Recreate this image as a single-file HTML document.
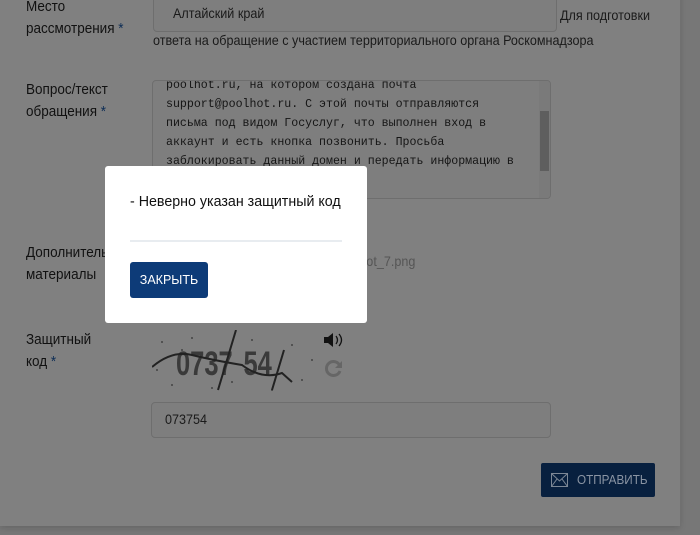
<!DOCTYPE html>
<html><head><meta charset="utf-8"><style>
body{margin:0;width:700px;height:535px;background:#777;position:relative;overflow:hidden;font-family:"Liberation Sans",sans-serif;color:#111}
.card{position:absolute;left:0;top:-10px;width:680px;height:536px;background:#808080;box-shadow:0 2px 6px rgba(0,0,0,.15)}
.a{position:absolute;white-space:nowrap}
.n{transform:scaleX(.9);transform-origin:0 0}
.lbl{font-size:15px;line-height:22px;color:#111}
.st{color:#0d2d55}
.inp{position:absolute;border:1px solid #6e6e6e;border-radius:4px;background:#7e7e7e}
.mono{font-family:"Liberation Mono","DejaVu Sans Mono",monospace;font-size:11.6px;line-height:19px;color:#151515}
.modal{position:absolute;left:105px;top:166px;width:262px;height:157px;background:#fff;border-radius:3px}
</style></head><body>
<div class="card"></div>
<div class="a lbl n" style="left:26px;top:-4px">Место<br>рассмотрения <span class="st">*</span></div>
<div class="inp" style="left:153px;top:-6px;width:402px;height:36px"></div>
<div class="a n" style="left:173px;top:5px;font-size:14px;color:#1a1a1a">Алтайский край</div>
<div class="a n" style="left:560px;top:7px;font-size:14px;color:#1a1a1a">Для подготовки</div>
<div class="a n" style="left:153px;top:32px;font-size:14px;color:#1a1a1a">ответа на обращение с участием территориального органа Роскомнадзора</div>
<div class="a lbl n" style="left:26px;top:79px">Вопрос/текст<br>обращения <span class="st">*</span></div>
<div class="inp" style="left:152px;top:80px;width:397px;height:117px;overflow:hidden">
<div class="mono" style="position:absolute;left:13px;top:-5px;white-space:pre">poolhot.ru, на котором создана почта
support@poolhot.ru. С этой почты отправляются
письма под видом Госуслуг, что выполнен вход в
аккаунт и есть кнопка позвонить. Просьба
заблокировать данный домен и передать информацию в
</div>
<div style="position:absolute;right:0;top:0;width:11px;height:117px;background:#7a7a7a"></div>
<div style="position:absolute;right:1px;top:30px;width:9px;height:60px;background:#5e5e5e"></div>
</div>
<div class="a lbl n" style="left:26px;top:242px">Дополнительные<br>материалы</div>
<div class="a n" style="left:353px;top:253px;font-size:14px;color:#555">shot_7.png</div>
<div class="a lbl n" style="left:26px;top:329px">Защитный<br>код <span class="st">*</span></div>
<svg class="a" style="left:152px;top:330px" width="170" height="65">
<g fill="#3a3a3a" font-family="Liberation Sans,sans-serif" font-size="34" font-weight="bold" transform="scale(.75,1)"><text x="32" y="45">0737</text><text x="122" y="45">54</text></g>
<g fill="#444"><circle cx="10" cy="12" r="1"/><circle cx="20" cy="55" r="1"/><circle cx="40" cy="8" r="1"/><circle cx="60" cy="58" r="1"/><circle cx="100" cy="10" r="1"/><circle cx="120" cy="60" r="1"/><circle cx="140" cy="15" r="1"/><circle cx="150" cy="50" r="1"/><circle cx="5" cy="40" r="1"/><circle cx="80" cy="52" r="1"/><circle cx="30" cy="20" r="1"/><circle cx="160" cy="30" r="1"/></g>
<path d="M0 37 Q20 20 40 25 T90 35 Q110 50 130 43 L140 52" stroke="#222" stroke-width="2" fill="none"/>
<path d="M66 60 L84 0 M120 60 L132 20" stroke="#222" stroke-width="2"/>
</svg>
<svg class="a" style="left:323px;top:332px" width="20" height="16"><path d="M1 5h4l5-4v14l-5-4H1z" fill="#111"/><path d="M13 4q3 4 0 8M16 2q5 6 0 12" stroke="#111" fill="none" stroke-width="1.3"/></svg>
<svg class="a" style="left:324px;top:358px" width="20" height="20"><path d="M16 8a7 7 0 1 0 0 5" stroke="#666" stroke-width="3" fill="none"/><path d="M18 3v7h-7z" fill="#666"/></svg>
<div class="inp" style="left:151px;top:402px;width:398px;height:34px"></div>
<div class="a n" style="left:165px;top:411px;font-size:14px;color:#1a1a1a">073754</div>
<div class="a" style="left:541px;top:463px;width:114px;height:34px;background:#08203f;border-radius:2px;color:#8a94a3;font-size:13px">
<svg style="position:absolute;left:10px;top:10px" width="17" height="14"><rect x=".5" y=".5" width="16" height="13" fill="none" stroke="#7c8795"/><path d="M.5 .5 L8.5 8 L16.5 .5 M.5 13.5 L6 6 M16.5 13.5 L11 6" stroke="#7c8795" fill="none"/></svg>
<span class="n" style="position:absolute;left:36px;top:9px">ОТПРАВИТЬ</span></div>
<div class="modal">
<div class="a" style="left:25px;top:27px;font-size:15px;color:#111;transform:scaleX(.95);transform-origin:0 0">- Неверно указан защитный код</div>
<div class="a" style="left:25px;top:74px;width:212px;height:2px;background:#e8ecf0"></div>
<div class="a" style="left:25px;top:96px;width:78px;height:36px;background:#0d3b78;border-radius:3px;color:#fff;font-size:12.5px;line-height:36px;text-align:center">ЗАКРЫТЬ</div>
</div>
</body></html>
